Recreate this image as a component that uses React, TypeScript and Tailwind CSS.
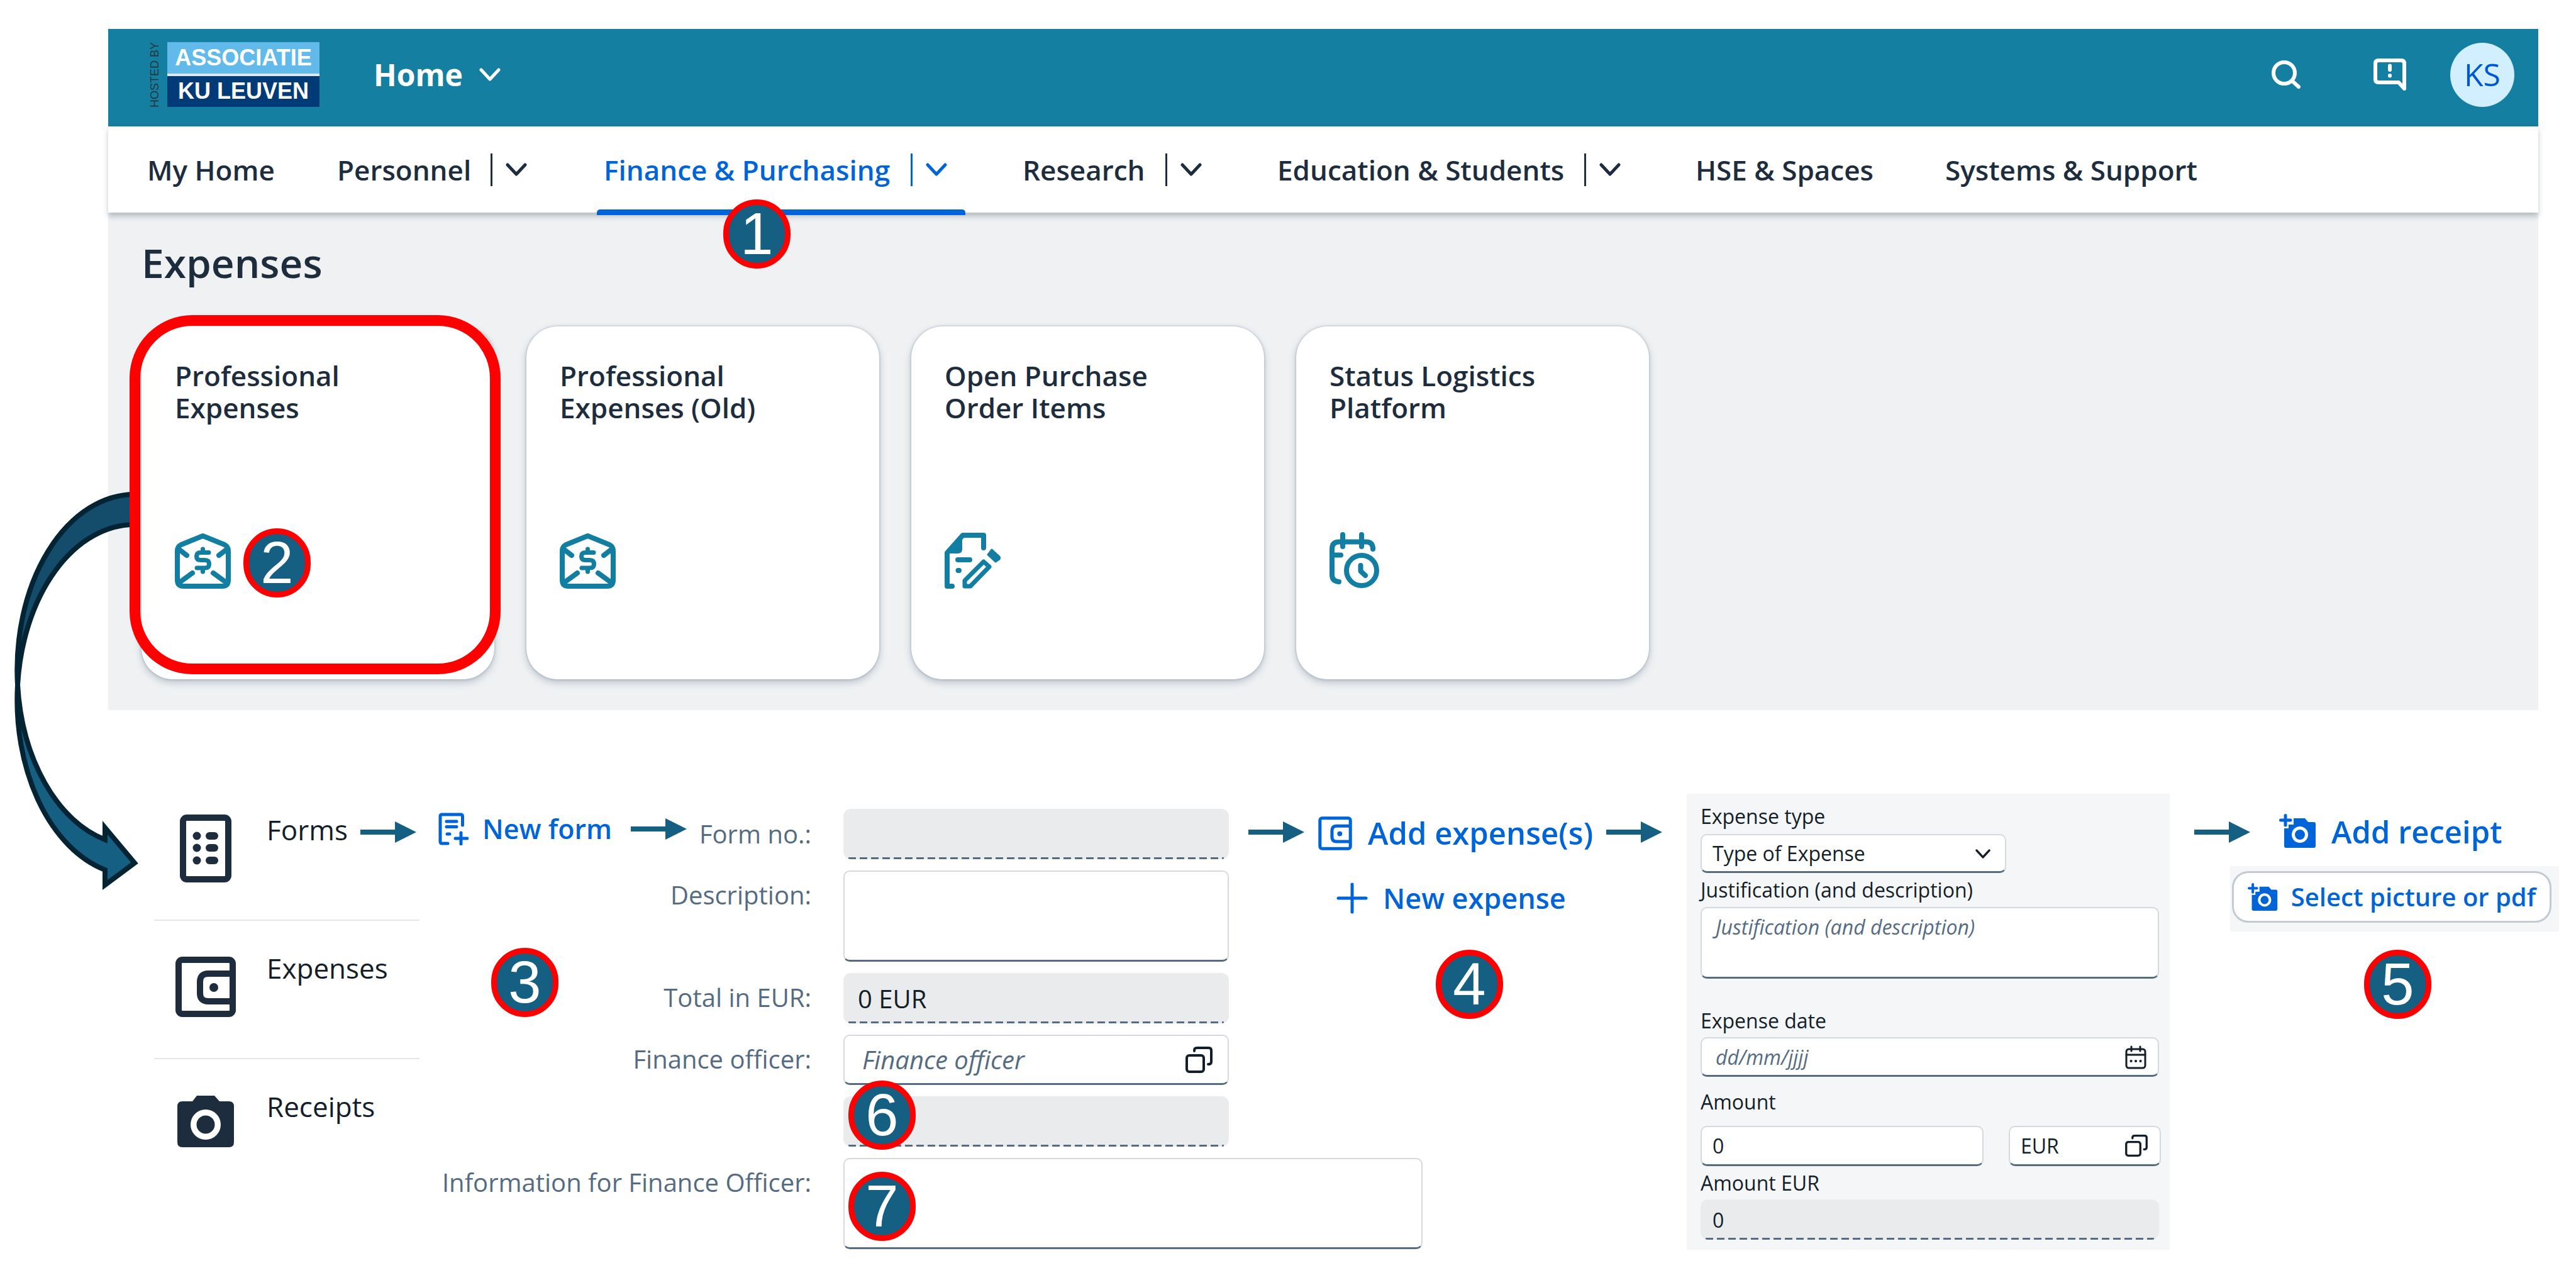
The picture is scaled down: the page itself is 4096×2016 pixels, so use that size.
import React from "react";

type Props = { className?: string };

/* ---------- icons ---------- */

function ChevronDown({ className = "" }: Props) {
  return (
    <svg viewBox="0 0 34 21" fill="none" stroke="currentColor" strokeWidth="5" strokeLinecap="round" strokeLinejoin="round" className={className} aria-hidden="true">
      <path d="M3 3 17 18 31 3" />
    </svg>
  );
}

function SearchIcon() {
  return (
    <svg viewBox="0 0 46 46" fill="none" stroke="currentColor" strokeWidth="6" strokeLinecap="round" className="size-[46px]" aria-hidden="true">
      <circle cx="20" cy="20" r="17" />
      <path d="M33 33 43 42" />
    </svg>
  );
}

function FeedbackIcon() {
  return (
    <svg viewBox="0 0 53 52" fill="none" stroke="currentColor" strokeWidth="6" strokeLinecap="round" strokeLinejoin="round" className="h-[52px] w-[53px]" aria-hidden="true">
      <path d="M49 8V48L40 38H8Q3 38 3 33V8Q3 3 8 3H44Q49 3 49 8Z" />
      <path d="M26 11.5V18" />
      <path d="M26 27V27.5" />
    </svg>
  );
}

function MoneyEnvelopeIcon() {
  return (
    <svg viewBox="0 0 89 89" fill="none" stroke="currentColor" strokeWidth="8" strokeLinecap="round" strokeLinejoin="round" className="size-[89px]" aria-hidden="true">
      <path d="M44.5 5 79 19Q85 22 85 29V75Q85 85 75 85H14Q4 85 4 75V29Q4 22 10 19Z" />
      <path d="M6 26 19 36M83 26 70 36M6 80 28 64M83 80 61 64" />
      <path strokeWidth="7" d="M54 31.5H41Q34.500 31.500 34.500 37.500 34.500 43.500 41 43.500H48Q54.500 43.500 54.500 50 54.500 56 48 56H35M44.500 26V31M44.500 57V62" />
    </svg>
  );
}

function DocumentEditIcon() {
  return (
    <svg viewBox="0 0 89 89" fill="none" stroke="currentColor" strokeWidth="8" strokeLinecap="round" strokeLinejoin="round" className="size-[89px]" aria-hidden="true">
      <path d="M62 24V4H29L4 32V85H12" />
      <path fill="currentColor" strokeWidth="4" d="M26 5V26Q26 31 21 31H4Z" />
      <path d="M21 43H40M21.500 60H23" />
      <path strokeWidth="7" d="M62 46 71 54 41 85H32V76Z" />
      <path fill="currentColor" strokeWidth="3" d="M75 27 87 38Q88 40 87 42L81 46 69 35Z" />
    </svg>
  );
}

function CalendarClockIcon() {
  return (
    <svg viewBox="0 0 80 90" fill="none" stroke="currentColor" strokeWidth="8" strokeLinecap="round" strokeLinejoin="round" className="h-[90px] w-[80px]" aria-hidden="true">
      <path d="M69 27V25Q68 15.500 58 15.500H15Q4 15.500 4 27V68Q4 78 15 79" />
      <path d="M21 4V23M51 4V23M5 36.500H18" />
      <circle cx="51" cy="61" r="24" />
      <path d="M49.500 53V62L57 69" />
    </svg>
  );
}

function FormsIcon() {
  return (
    <svg viewBox="0 0 82 108" fill="currentColor" className="h-[108px] w-[82px]" aria-hidden="true">
      <rect x="5" y="5" width="72" height="98" rx="6" fill="none" stroke="currentColor" strokeWidth="10" />
      <circle cx="27" cy="34" r="6.500" />
      <circle cx="27" cy="53" r="6.500" />
      <circle cx="27" cy="73" r="6.500" />
      <rect x="41" y="28" width="20" height="12" rx="6" />
      <rect x="41" y="47" width="20" height="12" rx="6" />
      <rect x="41" y="67" width="20" height="12" rx="6" />
    </svg>
  );
}

function WalletIcon({ className = "", weight = 10 }: Props & { weight?: number }) {
  return (
    <svg viewBox="0 0 96 96" fill="none" stroke="currentColor" strokeWidth={weight} strokeLinejoin="round" className={className} aria-hidden="true">
      <rect x="5" y="5" width="86" height="86" rx="6" />
      <path d="M90 27H52Q39 27 39 40V58Q39 71 52 71H90" />
      <circle cx="61" cy="49" r="7" fill="currentColor" stroke="none" />
    </svg>
  );
}

function CameraIcon() {
  return (
    <svg viewBox="0 0 90 82" fill="currentColor" className="mb-3 h-[82px] w-[90px]" aria-hidden="true">
      <path fillRule="evenodd" d="M31 0H59L67 9H82Q90 9 90 17V74Q90 82 82 82H8Q0 82 0 74V17Q0 9 8 9H24ZM45 22A24 24 0 1 0 45 70 24 24 0 1 0 45 22ZM45 31.500A14.500 14.500 0 1 1 45 60.500 14.500 14.500 0 1 1 45 31.500Z" />
    </svg>
  );
}

function CameraPlusIcon({ className = "" }: Props) {
  return (
    <svg viewBox="0 0 59 54" fill="currentColor" className={className} aria-hidden="true">
      <path fillRule="evenodd" d="M8 23H15V17H23V7H41L46 13H55Q58 13 58 16V51Q58 54 55 54H11Q8 54 8 51ZM33 20A13 13 0 1 0 33 46 13 13 0 1 0 33 20ZM33 25A8 8 0 1 1 33 41 8 8 0 1 1 33 25Z" />
      <path fill="none" stroke="currentColor" strokeWidth="5" strokeLinecap="round" d="M10 2.500V18M2.500 10H18" />
    </svg>
  );
}

function NewFormIcon() {
  return (
    <svg viewBox="0 0 48 52" fill="none" stroke="currentColor" strokeWidth="5" strokeLinecap="round" strokeLinejoin="round" className="h-[52px] w-[48px]" aria-hidden="true">
      <path d="M38.500 20V6Q38.500 3 35.500 3H6Q3 3 3 6V46Q3 49 6 49H15" />
      <path d="M13 14H29M13 22.500H29M14 34H18" />
      <path d="M36 32V50M27 41H46" />
    </svg>
  );
}

function PlusIcon() {
  return (
    <svg viewBox="0 0 50 50" fill="none" stroke="currentColor" strokeWidth="5" strokeLinecap="round" className="size-[50px]" aria-hidden="true">
      <path d="M25 3V47M3 25H47" />
    </svg>
  );
}

function ValueHelpIcon({ className = "" }: Props) {
  return (
    <svg viewBox="0 0 43 42" fill="none" stroke="currentColor" strokeWidth="4" strokeLinecap="round" strokeLinejoin="round" className={className} aria-hidden="true">
      <rect x="2" y="14" width="27" height="26" rx="4" />
      <path d="M14 7V6Q14 2 18 2H37Q41 2 41 6V24Q41 28 37 28H36" />
    </svg>
  );
}

function CalendarIcon({ className = "" }: Props) {
  return (
    <svg viewBox="0 0 34 38" fill="none" stroke="currentColor" strokeWidth="3" strokeLinecap="round" strokeLinejoin="round" className={className} aria-hidden="true">
      <rect x="2" y="6" width="30" height="30" rx="4" />
      <path d="M2 15H32M10 2V9M24 2V9" />
      <path strokeWidth="4" d="M9.500 25H9.600M17 25H17.100M24.500 25H24.600" />
    </svg>
  );
}

function FlowArrow({ className = "" }: Props) {
  return (
    <svg viewBox="0 0 89 34" fill="#155f82" className={`h-[34px] w-[89px] shrink-0 ${className}`} aria-hidden="true">
      <path d="M0 13H55V0L89 17 55 34V21H0Z" />
    </svg>
  );
}

function CurvedArrow() {
  return (
    <svg viewBox="0 0 230 660" strokeWidth="8" stroke="#042433" strokeLinejoin="miter" className="pointer-events-none absolute left-0 top-[770px] h-[660px] w-[230px]" aria-hidden="true">
      <path fill="#134d6b" d="M214 16A187 279 0 0 0 28 319A187 279 0 0 1 214 64Z" />
      <path fill="#155f82" d="M28 319A187 279 0 0 0 167 613V637L214 602 167 546V565A187 279 0 0 1 28 319Z" />
    </svg>
  );
}

/* ---------- small parts ---------- */

function Step({ n, className }: { n: number; className: string }) {
  return (
    <span className={`absolute z-20 flex h-[110px] w-[107px] items-center justify-center rounded-full border-[9px] border-[#ff0000] bg-[#155f82] font-['Liberation_Sans',sans-serif] text-[94px] font-normal leading-none text-white ${className}`}>
      {n}
    </span>
  );
}

const field =
  "block w-full rounded-[10px] border-2 border-b-[3px] border-[#d3d9df] border-b-[#556b82] bg-white text-[#131e29] outline-none placeholder:italic placeholder:text-[#556b82] placeholder:opacity-100";
const readOnlyField =
  "block w-full rounded-[12px] bg-[#eaebed] bg-[repeating-linear-gradient(90deg,#556b82_0_12px,transparent_12px_18px)] bg-[length:calc(100%-16px)_3px] bg-bottom bg-no-repeat text-[#131e29] outline-none";

const navItems = [
  { label: "My Home", menu: false, active: false, box: "mr-[106px] w-[196px]" },
  { label: "Personnel", menu: true, active: false, box: "mr-[122px] w-[302px]" },
  { label: "Finance & Purchasing", menu: true, active: true, box: "mr-[120px] w-[546px]" },
  { label: "Research", menu: true, active: false, box: "mr-[120px] w-[285px]" },
  { label: "Education & Students", menu: true, active: false, box: "mr-[119px] w-[546px]" },
  { label: "HSE & Spaces", menu: false, active: false, box: "mr-[102px] w-[295px]" },
  { label: "Systems & Support", menu: false, active: false, box: "" },
];

const tiles = [
  { lines: ["Professional", "Expenses"], icon: <MoneyEnvelopeIcon />, marked: true },
  { lines: ["Professional", "Expenses (Old)"], icon: <MoneyEnvelopeIcon />, marked: false },
  { lines: ["Open Purchase", "Order Items"], icon: <DocumentEditIcon />, marked: false },
  { lines: ["Status Logistics", "Platform"], icon: <CalendarClockIcon />, marked: false },
];

function Header() {
  return (
    <header className="flex items-center bg-[#157fa2] pb-[31px] pl-[66px] pr-[38px] pt-[21px] text-white">
      <div className="flex h-[103px] items-stretch gap-3">
        <span className="flex w-[16px] rotate-180 items-center justify-center whitespace-nowrap font-['Liberation_Sans',sans-serif] text-[18px] leading-[16px] text-[#24363c] [writing-mode:vertical-rl]">
          HOSTED BY
        </span>
        <div className="flex w-[242px] flex-col gap-1 bg-[#dfe9f6] font-['Liberation_Sans',sans-serif] text-[36px] font-bold leading-none">
          <span className="flex flex-1 items-center justify-center bg-[#62baea]">ASSOCIATIE</span>
          <span className="flex flex-1 items-center justify-center bg-[#003b77]">KU LEUVEN</span>
        </div>
      </div>
      <button type="button" className="ml-[86px] flex items-center gap-[26px] text-[48px] font-bold">
        Home
        <ChevronDown className="h-[21px] w-[34px]" />
      </button>
      <div className="ml-auto flex items-center">
        <button type="button" aria-label="Search"><SearchIcon /></button>
        <button type="button" aria-label="Feedback" className="ml-[116px]"><FeedbackIcon /></button>
        <button type="button" className="ml-[69px] flex size-[102px] items-center justify-center rounded-full bg-[#d1efff] text-[50px] text-[#0057d2]">KS</button>
      </div>
    </header>
  );
}

function Nav() {
  return (
    <nav className="relative z-10 flex h-[137px] items-stretch bg-white pl-[62px] text-[44px] font-semibold text-[#1d2d3e] shadow-[0_6px_8px_0_rgba(80,95,105,0.35)]">
      {navItems.map((item) => (
        <div key={item.label} className={`relative flex items-center whitespace-nowrap ${item.box} ${item.active ? "text-[#0064d9]" : ""}`}>
          <a href="#">{item.label}</a>
          {item.menu && (
            <button type="button" aria-label={`${item.label} menu`} className="ml-auto flex items-center gap-[21px]">
              <span className="h-[52px] w-[3px] bg-current" />
              <ChevronDown className="h-[21px] w-[34px]" />
            </button>
          )}
          {item.active && (
            <>
              <span className="absolute -bottom-1 -left-[11px] -right-[29px] h-[9px] rounded-t-[5px] bg-[#0064d9]" />
              <Step n={1} className="-bottom-[89px] left-[190px]" />
            </>
          )}
        </div>
      ))}
    </nav>
  );
}

function Tiles() {
  return (
    <section className="bg-[#eff1f3] pb-[49px] pl-[53px] pt-[40px]">
      <h1 className="text-[64px] font-semibold leading-[80px] text-[#1d2d3e]">Expenses</h1>
      <div className="mt-[61px] flex gap-[51px]">
        {tiles.map((tile) => (
          <div key={tile.lines.join(" ")} className="relative">
            <a href="#" className="flex size-[561px] flex-col justify-between rounded-[50px] bg-white pb-[144px] pl-[53px] pt-[53px] text-[44px] font-semibold leading-[51px] text-[#1d2d3e] shadow-[0_0_3px_1px_rgba(85,107,130,0.25),0_5px_12px_rgba(85,107,130,0.35)]">
              <span>
                {tile.lines[0]}
                <br />
                {tile.lines[1]}
              </span>
              <span className="text-[#127ea2]">{tile.icon}</span>
            </a>
            {tile.marked && (
              <>
                <span className="pointer-events-none absolute -left-[19px] -top-[18px] h-[571px] w-[590px] rounded-[100px] border-[17px] border-[#ff0000]" />
                <Step n={2} className="left-[162px] top-[321px]" />
              </>
            )}
          </div>
        ))}
      </div>
    </section>
  );
}

function SideList() {
  const rows = [
    { label: "Forms", icon: <FormsIcon /> },
    { label: "Expenses", icon: <WalletIcon className="size-[96px]" /> },
    { label: "Receipts", icon: <CameraIcon /> },
  ];
  return (
    <ul className="w-[422px] shrink-0 text-[44px] text-[#131e29]">
      {rows.map((row, i) => (
        <li key={row.label} className={`flex h-[220px] items-start pl-[34px] pt-[50px] ${i < 2 ? "border-b-2 border-[#e5e5e5]" : ""}`}>
          <a href="#" className="flex items-start gap-[49px]">
            <span className="flex h-[110px] w-[96px] items-center justify-center text-[#1d2d3e]">{row.icon}</span>
            <span className="leading-[50px]">{row.label}</span>
          </a>
          {i === 0 && <FlowArrow className="ml-auto mr-[5px] mt-3" />}
        </li>
      ))}
    </ul>
  );
}

function FormColumn() {
  const label = "flex h-[78px] items-center justify-end whitespace-nowrap text-[#556b82]";
  return (
    <form className="relative ml-[30px] mt-[42px] grid w-[1257px] shrink-0 grid-cols-[593px_613px] gap-x-[51px] gap-y-[18px] text-[40px]">
      <div className="flex h-[80px] items-center">
        <button type="button" className="mb-4 flex items-center gap-[22px] whitespace-nowrap text-[43px] font-semibold text-[#0064d9]">
          <NewFormIcon />
          New form
        </button>
        <FlowArrow className="mb-4 ml-[30px]" />
        <label htmlFor="form-no" className="ml-auto whitespace-nowrap text-[#556b82]">Form no.:</label>
      </div>
      <input id="form-no" readOnly className={`${readOnlyField} h-[80px] px-6`} />

      <label htmlFor="description" className={label}>Description:</label>
      <textarea id="description" className={`${field} h-[145px] resize-none px-6 py-4`} />

      <label htmlFor="total" className={label}>Total in EUR:</label>
      <input id="total" readOnly defaultValue="0 EUR" className={`${readOnlyField} h-[80px] px-[23px]`} />

      <label htmlFor="officer" className={label}>Finance officer:</label>
      <div className="relative">
        <input id="officer" placeholder="Finance officer" className={`${field} h-[80px] pl-7 pr-24`} />
        <button type="button" aria-label="Choose finance officer" className="absolute right-[26px] top-[19px] text-[#131e29]">
          <ValueHelpIcon className="h-[42px] w-[43px]" />
        </button>
      </div>

      <input aria-label="Finance officer name" readOnly className={`${readOnlyField} col-start-2 h-[80px] px-6`} />

      <label htmlFor="information" className={label}>Information for Finance Officer:</label>
      <textarea id="information" className={`${field} h-[145px] min-w-[921px] resize-none px-6 py-4`} />

      <Step n={3} className="left-[84px] top-[221px]" />
      <Step n={6} className="left-[652px] top-[432px]" />
      <Step n={7} className="left-[652px] top-[577px]" />
    </form>
  );
}

function AddExpense() {
  return (
    <div className="relative ml-[31px] mt-[39px] shrink-0 text-[#0064d9]">
      <div className="flex h-[80px] items-center">
        <FlowArrow />
        <button type="button" className="ml-[22px] flex w-[440px] items-center gap-[25px] whitespace-nowrap pt-[4px] text-[49px] font-semibold">
          <WalletIcon className="size-[54px]" weight={9} />
          Add expense(s)
        </button>
        <FlowArrow className="ml-[18px]" />
      </div>
      <button type="button" className="ml-[140px] mt-[35px] flex h-[60px] items-center gap-[24px] whitespace-nowrap text-[45px] font-semibold">
        <PlusIcon />
        New expense
      </button>
      <Step n={4} className="left-[298px] top-[227px]" />
    </div>
  );
}

function ExpensePanel() {
  const label = "block leading-[40px]";
  return (
    <form className="ml-[39px] mt-[18px] min-w-0 flex-1 bg-[#f5f6f8] pb-[16px] pl-[22px] pr-[14px] pt-[16px] text-[32px] text-[#131e29]">
      <label htmlFor="type" className={label}>Expense type</label>
      <div className="relative mt-[8px] w-[486px]">
        <select id="type" className={`${field} h-[62px] appearance-none px-[17px]`}>
          <option>Type of Expense</option>
        </select>
        <ChevronDown className="pointer-events-none absolute right-[24px] top-[24px] h-[15px] w-[26px]" />
      </div>
      <label htmlFor="justification" className={`${label} mt-[7px]`}>Justification (and description)</label>
      <div className="mt-[7px] pr-[3px]">
        <textarea id="justification" placeholder="Justification (and description)" className={`${field} h-[114px] resize-none px-[22px] py-[8px] leading-[44px]`} />
      </div>
      <label htmlFor="date" className={`${label} mt-[47px]`}>Expense date</label>
      <div className="relative mt-[6px] mr-[3px]">
        <input id="date" placeholder="dd/mm/jjjj" className={`${field} h-[63px] pl-[22px] pr-20`} />
        <button type="button" aria-label="Open calendar" className="absolute right-[20px] top-[13px]">
          <CalendarIcon className="h-[38px] w-[34px]" />
        </button>
      </div>
      <label htmlFor="amount" className={`${label} mt-[20px]`}>Amount</label>
      <div className="mt-[18px] flex gap-[40px]">
        <input id="amount" defaultValue="0" className={`${field} h-[64px] min-w-0 flex-1 px-[17px]`} />
        <div className="relative w-[242px] shrink-0">
          <input aria-label="Currency" defaultValue="EUR" className={`${field} h-[64px] pl-[17px] pr-16`} />
          <button type="button" aria-label="Choose currency" className="absolute right-[21px] top-[14px]">
            <ValueHelpIcon className="h-[35px] w-[36px]" />
          </button>
        </div>
      </div>
      <label htmlFor="amount-eur" className={`${label} mt-[7px]`}>Amount EUR</label>
      <div className="mt-[6px] pr-[3px]">
        <input id="amount-eur" readOnly defaultValue="0" className={`${readOnlyField} h-[64px] px-[19px]`} />
      </div>
    </form>
  );
}

function AddReceipt() {
  return (
    <div className="relative ml-[39px] mr-[27px] mt-[39px] flex shrink-0 flex-col text-[#0064d9]">
      <div className="flex h-[80px] items-center">
        <FlowArrow />
        <button type="button" className="ml-[46px] flex items-center gap-[24px] whitespace-nowrap text-[49px] font-semibold">
          <CameraPlusIcon className="mb-1 h-[54px] w-[59px]" />
          Add receipt
        </button>
      </div>
      <div className="ml-[57px] mt-[14px] h-[104px] w-[523px] bg-[#f5f6f8] pb-[14px] pl-[3px] pr-[12px] pt-[8px]">
        <button type="button" className="flex h-[82px] w-full items-center justify-center gap-[21px] whitespace-nowrap rounded-[26px] border-[3px] border-[#c4cad1] bg-white text-[40px] font-semibold">
          <CameraPlusIcon className="h-[44px] w-[48px]" />
          Select picture or pdf
        </button>
      </div>
      <Step n={5} className="left-[270px] top-[227px]" />
    </div>
  );
}

export default function App() {
  return (
    <div className="relative min-h-screen overflow-hidden bg-white pt-[46px] font-['Open_Sans','Noto_Sans',sans-serif]">
      <CurvedArrow />
      <main className="ml-[172px] mr-[60px]">
        <Header />
        <Nav />
        <Tiles />
      </main>
      <div className="flex items-start pl-[245px] pt-[115px]">
        <SideList />
        <FormColumn />
        <AddExpense />
        <ExpensePanel />
        <AddReceipt />
      </div>
    </div>
  );
}
